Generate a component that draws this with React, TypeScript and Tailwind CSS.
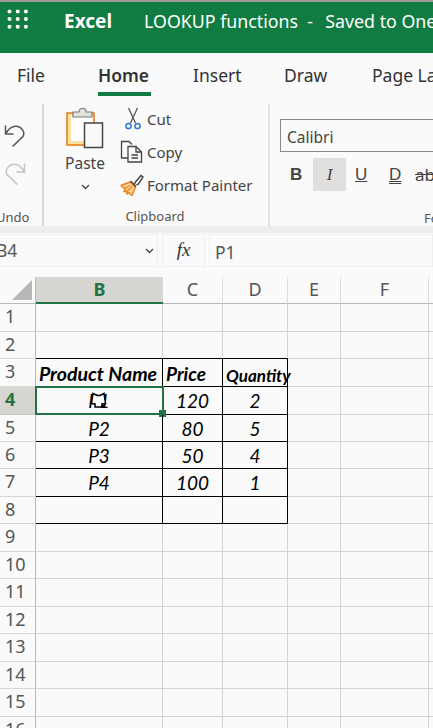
import React from "react";

const ui = "font-['Noto_Sans','Open_Sans',sans-serif]";
const sheet = "font-['Lato','Liberation_Sans',sans-serif]";

const heights = ["h-[28px]", "h-[27px]", "h-[28px]", "h-[28px]", "h-[27px]", "h-[27px]", "h-[28px]", "h-[27px]", "h-[28px]", "h-[27px]", "h-[28px]", "h-[27px]", "h-[28px]", "h-[27px]", "h-[28px]", "h-[27px]"];

const table: Record<number, string[]> = {
  3: ["Product Name", "Price", "Quantity"],
  4: ["P1", "120", "2"],
  5: ["P2", "80", "5"],
  6: ["P3", "50", "4"],
  7: ["P4", "100", "1"],
  8: ["", "", ""],
};

function Waffle() {
  const dots = [0, 1, 2].flatMap((r) => [0, 1, 2].map((c) => [c, r]));
  return (
    <svg width="22" height="22" viewBox="0 0 22 22" className="shrink-0">
      {dots.map(([c, r]) => (
        <circle key={`${c}-${r}`} cx={2.5 + c * 8.2} cy={2.5 + r * 7.6} r="2" fill="#fff" />
      ))}
    </svg>
  );
}

function PasteIcon() {
  return (
    <svg width="38" height="42" viewBox="0 0 38 42">
      <rect x="1" y="6" width="27" height="32" fill="#fbe0a0" stroke="#e8811a" strokeWidth="1.600" />
      <rect x="5" y="8" width="22" height="26" fill="#fff" />
      <path d="M7 5h6c0-5 7-5 7 0h6v5H7z" fill="#e4e2df" stroke="#7a7a7a" strokeWidth="1.200" />
      <rect x="18.500" y="16" width="18" height="24.500" fill="#fafafa" stroke="#444" strokeWidth="1.500" />
    </svg>
  );
}

function CutIcon() {
  return (
    <svg width="16" height="23" viewBox="0 0 16 23" fill="none">
      <path d="M3.500 1l7 15M12.500 1l-7 15" stroke="#555" strokeWidth="1.300" />
      <circle cx="3.500" cy="19" r="2.600" stroke="#2b7cd3" strokeWidth="1.500" />
      <circle cx="12.500" cy="19" r="2.600" stroke="#2b7cd3" strokeWidth="1.500" />
    </svg>
  );
}

function CopyIcon() {
  return (
    <svg width="23" height="23" viewBox="0 0 23 23" fill="none" stroke="#444" strokeWidth="1.300">
      <path d="M8 18H1.500V1.500H9l3 3" />
      <path d="M8 6.500h8l5.500 5.500v10H8z" fill="#fafafa" />
      <path d="M16 6.500V12h5.500M11.500 15h6.500M11.500 18h6.500" />
    </svg>
  );
}

function PainterIcon() {
  return (
    <svg width="24" height="22" viewBox="0 0 24 22" fill="none">
      <path d="M1 11.500 10 8l5.500 5.500-3.500 8-3.500-3-1.500 1.500-1-3-2 .5 1-2.500z" fill="#fbcf93" stroke="#e8811a" strokeWidth="1.400" strokeLinejoin="round" />
      <path d="M4 14.500l6-3M7 17.500l5-5" stroke="#e8811a" strokeWidth="1.100" />
      <path d="M10.500 7l5.500 5.500M14.500 10l1-2 5.500-6.500 2 1.500-4.500 7-2 1" stroke="#444" strokeWidth="1.400" />
    </svg>
  );
}

function UndoIcon({ color }: { color: string }) {
  return (
    <svg width="22" height="24" viewBox="0 0 22 24" fill="none" stroke={color} strokeWidth="1.500">
      <path d="M1.500 1.500V10H9.500M1.500 10C5 4 10 1.500 14 2.500C19 4 21 9 19 12.500L8.500 22.500" />
    </svg>
  );
}

function RedoIcon({ color }: { color: string }) {
  return (
    <svg width="22" height="24" viewBox="0 0 22 24" fill="none" stroke={color} strokeWidth="1.500">
      <path d="M20.500 1.500V10H12.500M20.500 10C17 4 12 1.500 8 2.500C3 4 1 9 3 12.500L13.500 22.500" />
    </svg>
  );
}

function Chevron() {
  return (
    <svg width="9" height="6" viewBox="0 0 9 6" fill="none" stroke="#444" strokeWidth="1.300">
      <path d="M1 1l3.500 3.500L8 1" />
    </svg>
  );
}

function Cursor() {
  return (
    <svg width="17" height="18" viewBox="0 0 17 18" className="absolute left-[53px] top-[3px]">
      <path d="M3 2.500 7 4.500h3l4-2 1.500 10-3.500.5v3H5v-3l-3.500-.5z" fill="#fff" stroke="#000" strokeWidth="1.500" strokeLinejoin="miter" />
      <path d="M11 14h3v2.500h-3z" fill="#000" />
    </svg>
  );
}

function Row({ n, h }: { n: number; h: string }) {
  const cells = table[n];
  const active = n === 4;
  const isTitle = n === 3;
  const topBlack = n === 3 ? "shadow-[0_-1px_0_#000]" : "";
  const boxed = "border-r border-b border-black";
  const plain = "border-r border-b border-[#d4d4d4]";
  return (
    <div className={`flex ${h}`}>
      <div
        className={`w-[36px] shrink-0 overflow-hidden border-r border-b pl-[5px] text-[18px] leading-[24px] ${ui} ${
          active ? "bg-[#d6d5d2] border-r-[#1e7145] border-b-[#c8c8c8] font-bold text-[#217346]" : "border-r-[#b8b8b8] border-b-[#d8d8d8] text-[#555]"
        }`}
      >
        {n}
      </div>
      {cells ? (
        <>
          <div className={`relative w-[127px] shrink-0 text-center ${boxed} ${topBlack} ${sheet} text-black italic ${isTitle ? "pr-[2px] text-[19.500px] font-bold leading-[30px] whitespace-nowrap" : "text-[19px] leading-[27px]"}`}>
            {cells[0]}
            {active && (
              <div className="absolute -left-px -top-px h-[29px] w-[129px] border-2 border-[#217346]">
                <Cursor />
                <div className="absolute -bottom-[4px] -right-[4px] h-[7px] w-[7px] bg-[#217346]" />
              </div>
            )}
          </div>
          <div className={`w-[60px] shrink-0 ${boxed} ${topBlack} ${sheet} text-black italic ${isTitle ? "pl-[3px] text-[19px] font-bold leading-[30px]" : "text-center text-[19px] leading-[27px]"}`}>
            {cells[1]}
          </div>
          <div className={`relative w-[65px] shrink-0 ${boxed} ${topBlack} ${sheet} text-black italic ${isTitle ? "pl-[3px] text-[17px] font-bold leading-[33px] whitespace-nowrap" : "text-center text-[19px] leading-[27px]"}`}>
            {cells[2]}
          </div>
        </>
      ) : (
        <>
          <div className={`w-[127px] shrink-0 ${plain}`} />
          <div className={`w-[60px] shrink-0 ${plain}`} />
          <div className={`w-[65px] shrink-0 ${plain}`} />
        </>
      )}
      <div className={`w-[53px] shrink-0 ${plain}`} />
      <div className={`w-[88px] shrink-0 ${plain}`} />
      <div className="flex-1 border-b border-[#d4d4d4]" />
    </div>
  );
}

export default function App() {
  return (
    <div className={`flex h-[728px] w-[433px] flex-col overflow-hidden bg-[#fafafa] ${ui}`}>
      <div className="h-[2px] shrink-0 bg-[#9a9a9a]" />
      {/* Title bar */}
      <div className="flex h-[51px] shrink-0 items-start overflow-hidden whitespace-nowrap bg-[#107c41] pl-[7px] pt-[7px] text-white">
        <Waffle />
        <span className="ml-[35px] shrink-0 text-[19px] font-bold leading-[25px]">Excel</span>
        <span className="ml-[32px] shrink-0 whitespace-pre text-[17.800px] leading-[25px]">
          LOOKUP functions  -  <span className="ml-[3px]">Saved to OneDrive</span>
        </span>
      </div>
      {/* Tabs */}
      <div className="flex h-[45px] shrink-0 items-start overflow-hidden whitespace-nowrap bg-[#fafafa] pl-[17px] pt-[10px] text-[17.500px] leading-[25px] text-[#333]">
        <span className="w-[81px] shrink-0">File</span>
        <div className="flex w-[95px] shrink-0 flex-col">
          <span className="font-semibold text-[#333]">Home</span>
          <div className="mt-[4px] h-[4px] w-[53px] bg-[#107c41]" />
        </div>
        <span className="w-[91px] shrink-0">Insert</span>
        <span className="w-[88px] shrink-0">Draw</span>
        <span className="shrink-0">Page Layout</span>
      </div>
      {/* Ribbon */}
      <div className="flex h-[128px] shrink-0 overflow-hidden bg-[#fafafa] pt-[6px] text-[#444]">
        <div className="flex w-[42px] shrink-0 flex-col items-start">
          <div className="ml-[4px] mt-[20px]"><UndoIcon color="#555" /></div>
          <div className="ml-[4px] mt-[14px]"><RedoIcon color="#c4c4c4" /></div>
          <span className="-ml-[4px] mt-[22px] text-[13px] leading-[18px] text-[#555]">Undo</span>
        </div>
        <div className="w-[2px] shrink-0 self-stretch bg-[#d8d8d8]" />
        <div className="flex w-[224px] shrink-0 flex-col">
          <div className="flex flex-1">
            <div className="ml-[21px] flex w-[40px] shrink-0 flex-col items-center pt-[3px]">
              <PasteIcon />
              <span className="mt-[4px] text-[15.500px] leading-[20px]">Paste</span>
              <div className="mt-[11px]"><Chevron /></div>
            </div>
            <div className="ml-[15px] -mt-[2px] flex shrink-0 flex-col text-[15px] leading-[20px]">
              <div className="flex h-[33px] items-center"><div className="ml-[5px] w-[23px]"><CutIcon /></div><span className="ml-[-1px]">Cut</span></div>
              <div className="flex h-[33px] items-center"><div className="w-[27px]"><CopyIcon /></div><span>Copy</span></div>
              <div className="flex h-[33px] items-center"><div className="w-[27px]"><PainterIcon /></div><span className="whitespace-nowrap">Format Painter</span></div>
            </div>
          </div>
          <div className="pb-[1px] pr-[2px] text-center text-[13px] leading-[18px] text-[#555]">Clipboard</div>
        </div>
        <div className="w-[2px] shrink-0 self-stretch bg-[#e2e2e2]" />
        <div className="flex min-w-0 flex-1 flex-col pl-[10px]">
          <div className="mt-[15px] h-[33px] w-[170px] border border-[#8a8a8a] pl-[6px] text-[15.500px] leading-[34px] text-[#444]">Calibri</div>
          <div className="mt-[6px] flex h-[33px] items-center whitespace-nowrap text-[17px] text-[#444]">
            <span className="w-[33px] shrink-0 pl-[10px] font-['Liberation_Sans',sans-serif] font-bold">B</span>
            <span className="flex h-[33px] w-[33px] shrink-0 items-center justify-center bg-[#e1dfdd] font-['Liberation_Serif',serif] italic">I</span>
            <span className="ml-[9px] w-[34px] shrink-0 font-['Liberation_Sans',sans-serif] underline">U</span>
            <span className="w-[26px] shrink-0 font-['Liberation_Sans',sans-serif] underline decoration-double">D</span>
            <span className="shrink-0 line-through">ab</span>
          </div>
          <div className="ml-[144px] mt-[18px] overflow-hidden whitespace-nowrap text-[13px] leading-[18px] text-[#555]">Font</div>
        </div>
      </div>
      <div className="h-[7px] shrink-0 bg-[#eeeeee]" />
      {/* Formula bar */}
      <div className="flex h-[44px] shrink-0 items-start gap-[4px] bg-[#fafafa] pt-[1px] text-[#555]">
        <div className="-ml-[6px] flex h-[33px] w-[164px] shrink-0 items-center justify-between border border-[#eeeeee] pl-[1px] pr-[3px] text-[17.500px]">
          <span>B4</span>
          <Chevron />
        </div>
        <div className="flex h-[33px] w-[43px] shrink-0 items-center justify-center border border-[#eeeeee] font-['Liberation_Serif',serif] text-[19px] italic text-[#333]">fx</div>
        <div className="h-[33px] flex-1 border border-[#eeeeee] pl-[5px] text-[17.500px] leading-[35px]">P1</div>
      </div>
      {/* Column headers */}
      <div className="flex h-[27px] shrink-0 text-[18px] leading-[25px] text-[#555]">
        <div className="flex w-[36px] shrink-0 items-end justify-end border-b border-r border-[#b8b8b8] pb-[3px] pr-[3px]">
          <div className="h-[20px] w-[20px] bg-[#b9b8b6] [clip-path:polygon(100%_0,100%_100%,0_100%)]" />
        </div>
        <div className="w-[127px] shrink-0 border-b-2 border-[#217346] bg-[#d6d5d2] text-center font-bold text-[#217346]">B</div>
        <div className="w-[60px] shrink-0 border-b border-r border-[#b8b8b8] text-center [border-right-color:#dddddd]">C</div>
        <div className="w-[65px] shrink-0 border-b border-r border-[#b8b8b8] text-center [border-right-color:#dddddd]">D</div>
        <div className="w-[53px] shrink-0 border-b border-r border-[#b8b8b8] text-center [border-right-color:#dddddd]">E</div>
        <div className="w-[88px] shrink-0 border-b border-r border-[#b8b8b8] text-center [border-right-color:#dddddd]">F</div>
        <div className="flex-1 border-b border-[#b8b8b8]" />
      </div>
      {/* Grid */}
      <div className="min-h-0 flex-1 overflow-hidden">
        {heights.map((h, i) => (
          <Row key={i} n={i + 1} h={h} />
        ))}
      </div>
    </div>
  );
}
